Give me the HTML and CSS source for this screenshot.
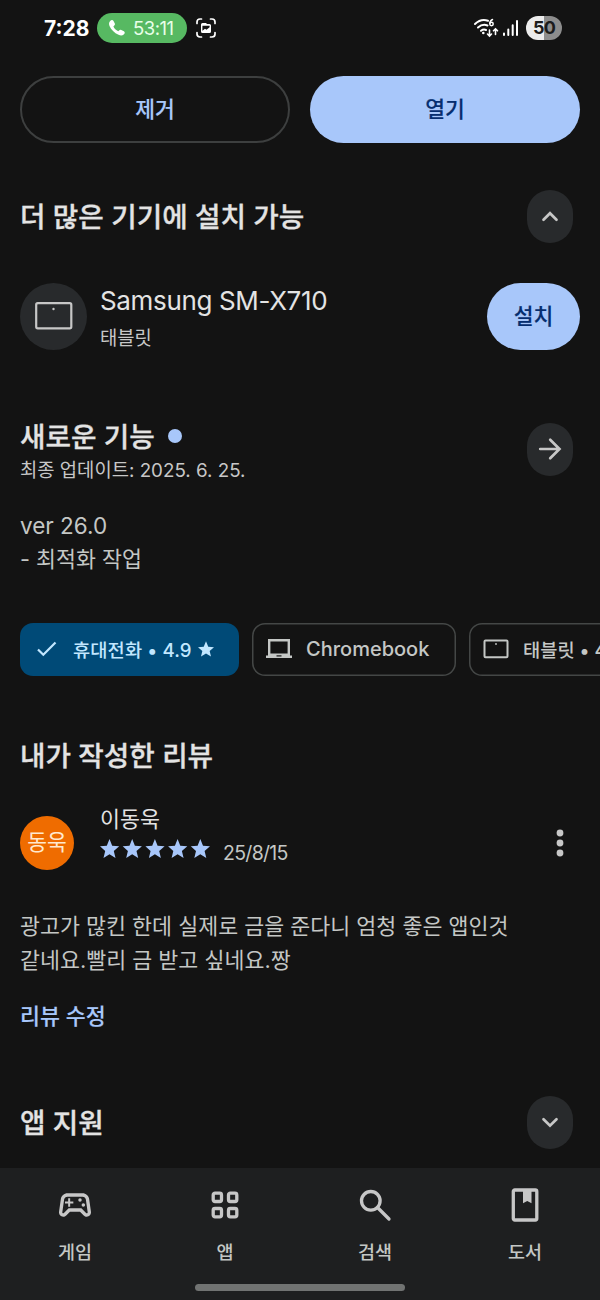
FILE: index.html
```html
<!DOCTYPE html>
<html lang="ko">
<head>
<meta charset="utf-8">
<title>앱 정보</title>
<link rel="stylesheet" href="styles.css">
</head>
<body>
<div class="screen">
  <header class="status">
    <span class="time">7:28</span>
    <span class="call">
      <svg width="18" height="18" viewBox="0 0 18 18"><path d="M2 2.200C3.200.8 4.800.8 5.500 2l1.300 2.600c.4.8.1 1.400-.5 2l-.9.9c.9 2 2.500 3.700 4.900 4.700l1-.9c.6-.6 1.300-.8 2-.4l2.600 1.400c1.200.8 1.100 2.200-.2 3.300-1.300 1.100-3.200 1.200-5.200.2C6.400 13.900 3.100 10.600 1.500 6.900.8 5 .9 3.400 2 2.200z" fill="#fff"/></svg>
      <span class="call-time">53:11</span>
    </span>
    <svg class="capture" width="22" height="22" viewBox="0 0 22 22" fill="none" stroke="#fff" stroke-width="1.700" stroke-linecap="round"><path d="M2 6.500V5Q2 2 5 2h1.500M15.500 2H17q3 0 3 3v1.500M20 15.500V17q0 3-3 3h-1.500M6.500 20H5q-3 0-3-3v-1.500"/><path fill-rule="evenodd" stroke="none" fill="#fff" d="M7.500 6h3.500l1 1h2.500Q16 7 16 8.500v6q0 1.500-1.500 1.500h-7Q6 16 6 14.500v-7Q6 6 7.500 6zM7.400 8.800v5l2.600-2 1.500 1 3.100-2.600V8.800z"/></svg>
    <div class="status-right">
      <svg width="26" height="22" viewBox="0 0 26 22" fill="none" stroke="#fff" stroke-width="2" stroke-linecap="round"><path d="M2 7Q8 1.300 15 3.800M5 10.500Q9.500 6.500 14.500 8.500M8 13.800q2.500-2 5-.8"/><circle cx="10.300" cy="16" r="1.300" fill="#fff" stroke="none"/><path stroke-width="1.500" d="M19.500 2.500Q17 3.500 16.800 6.500"/><circle cx="18.500" cy="7" r="1.700" stroke-width="1.500"/><path stroke-width="1.600" d="M16.500 13v5.500M14.500 17l2 2 2-2M22.500 17.500V12M20.500 13.800l2-2 2 2"/></svg>
      <svg class="bars" width="17" height="18" viewBox="0 0 17 18" stroke="#fff" stroke-width="2" stroke-linecap="round"><path d="M2 14.500V16M6.300 10.500V16M10.700 6.300V16"/><path d="M15 2V16"/></svg>
      <span class="battery">50</span>
    </div>
  </header>

  <div class="actions">
    <button class="btn outline">제거</button>
    <button class="btn filled">열기</button>
  </div>

  <section class="head devices-head">
    <h2>더 많은 기기에 설치 가능</h2>
    <span class="round"><svg width="24" height="24" viewBox="0 0 24 24"><path d="M5.500 14.700 12 8.200l6.500 6.500"/></svg></span>
  </section>

  <div class="device">
    <span class="device-icon"><svg width="38" height="28" viewBox="0 0 38 28"><rect x="1.200" y="1.200" width="35.100" height="25.100" rx="1.500"/><circle cx="18.500" cy="7" r="1.200"/></svg></span>
    <div class="device-text">
      <div class="device-name">Samsung SM-X710</div>
      <div class="device-kind">태블릿</div>
    </div>
    <button class="btn filled install">설치</button>
  </div>

  <section class="head news-head">
    <div>
      <h2>새로운 기능<i class="dot"></i></h2>
      <p class="updated">최종 업데이트: <span class="upd-date">2025. 6. 25.</span></p>
    </div>
    <span class="round"><svg width="24" height="24" viewBox="0 0 24 24"><path d="M2.200 12h19M12.200 2.700l9.300 9.300-9.300 9.300"/></svg></span>
  </section>
  <div class="notes"><p class="ver">ver 26.0</p><p>- 최적화 작업</p></div>

  <div class="chips">
    <span class="chip on">
      <svg width="22" height="18" viewBox="0 0 22 18"><path class="line" d="M2 9.500l5.300 5.300L19.500 2.500"/></svg>
      <span class="chip-label">휴대전화 • 4.9</span>
      <svg class="chip-star" width="16" height="16" viewBox="0 0 24 24"><path d="M12 .5l3.400 8 8.600.7-6.500 5.700 2 8.500L12 18.900l-7.500 4.500 2-8.500L0 9.200l8.600-.7z"/></svg>
    </span>
    <span class="chip book">
      <svg width="28" height="22" viewBox="0 0 28 22"><path fill-rule="evenodd" d="M3 1h22v16.500h2V20H1v-2.500h2zM5.400 3.400v12.200h17.200V3.400z"/><path class="cut" d="M11.500 17.300h5v1.200h-5z"/></svg>
      <span class="chip-label">Chromebook</span>
    </span>
    <span class="chip tab">
      <svg width="26" height="20" viewBox="0 0 26 20"><rect class="line thin" x="1.500" y="1.500" width="23" height="16.700" rx="1"/><circle cx="13" cy="5" r=".9"/></svg>
      <span class="chip-label">태블릿 • 4</span>
    </span>
  </div>

  <h2 class="mine">내가 작성한 리뷰</h2>
  <div class="author">
    <span class="avatar">동욱</span>
    <div class="author-info">
      <div class="author-name">이동욱</div>
      <div class="rating">
        <svg class="stars" width="112" height="20" viewBox="0 0 112 20"><defs><path id="star" d="M9.500 0l2.700 6.700 7 .6-5.400 4.700 1.700 7-6-3.800-6 3.800 1.700-7L0 7.300l6.800-.6z"/></defs><use href="#star"/><use href="#star" x="22.700"/><use href="#star" x="45.400"/><use href="#star" x="68.100"/><use href="#star" x="90.800"/></svg>
        <span class="date">25/8/15</span>
      </div>
    </div>
    <svg class="more" width="8" height="30" viewBox="0 0 8 30"><circle cx="4" cy="5" r="3.400"/><circle cx="4" cy="15" r="3.400"/><circle cx="4" cy="25" r="3.400"/></svg>
  </div>
  <p class="review">광고가 많킨 한데 실제로 금을 준다니 엄청 좋은 앱인것<br>같네요.빨리 금 받고 싶네요.짱</p>
  <a class="edit">리뷰 수정</a>

  <section class="head support-head">
    <h2>앱 지원</h2>
    <span class="round"><svg width="24" height="24" viewBox="0 0 24 24"><path d="M5.500 8.200 12 14.700l6.500-6.500"/></svg></span>
  </section>

  <nav class="nav">
    <div class="tabs">
      <div class="tab-item"><svg width="40" height="40" viewBox="0 0 24 24"><path fill-rule="evenodd" d="M21.580 16.090l-1.090-7.660C20.210 6.460 18.520 5 16.530 5H7.470C5.480 5 3.790 6.460 3.510 8.430l-1.090 7.660C2.200 17.630 3.390 19 4.940 19c.68 0 1.320-.27 1.800-.75L9 16h6l2.250 2.250c.48.48 1.130.75 1.800.75 1.560 0 2.750-1.370 2.530-2.910zM19.480 16.810c-.08.09-.21.19-.42.19-.15 0-.29-.06-.39-.16L15.830 14H8.170l-2.840 2.840c-.1.1-.24.16-.39.16-.21 0-.34-.1-.42-.19-.08-.09-.16-.23-.13-.44l1.090-7.660C5.630 7.740 6.480 7 7.470 7h9.060c.99 0 1.840.74 1.980 1.720l1.090 7.660c.03.2-.05.34-.12.43z"/><path d="M9.100 8H7.900v1.900H6v1.200h1.900V13h1.200v-1.900H11V9.900H9.100z"/><circle cx="15" cy="9" r="1.050"/><circle cx="17" cy="12" r="1.050"/></svg><span>게임</span></div>
      <div class="tab-item"><svg width="40" height="40" viewBox="0 0 40 40"><g class="stroke"><rect x="8.200" y="8.200" width="8.300" height="8.300" rx="1.800"/><rect x="23.500" y="8.200" width="8.300" height="8.300" rx="1.800"/><rect x="8.200" y="23.500" width="8.300" height="8.300" rx="1.800"/><rect x="23.500" y="23.500" width="8.300" height="8.300" rx="1.800"/></g></svg><span>앱</span></div>
      <div class="tab-item"><svg width="40" height="40" viewBox="0 0 40 40"><g class="stroke"><circle cx="15.800" cy="15.800" r="9.300"/><path stroke-linecap="round" d="M22.500 22.500 34 34"/></g></svg><span>검색</span></div>
      <div class="tab-item"><svg width="40" height="40" viewBox="0 0 40 40"><rect class="stroke" x="8.300" y="5" width="23.500" height="30" rx="1.500"/><path d="M18 5h8.500v13.200l-4.250-2.200L18 18.200z"/></svg><span>도서</span></div>
    </div>
    <div class="handle"></div>
  </nav>
</div>
</body>
</html>
```
FILE: styles.css
```css
* { box-sizing: border-box; }
body { margin: 0; background: #131313; }
h2, p { margin: 0; }
svg { display: block; flex: none; }
.screen {
  width: 600px;
  height: 1300px;
  overflow: hidden;
  display: flex;
  flex-direction: column;
  background: #131313;
  color: #e3e3e3;
  font-family: Inter, "Noto Sans CJK KR", sans-serif;
  white-space: nowrap;
}
.status { display: flex; align-items: center; height: 56px; padding: 0 38px 0 44px; flex: none; }
.time { width: 53px; font-size: 21px; font-weight: 700; color: #fff; }
.call { display: flex; align-items: center; width: 90px; height: 30px; padding-left: 11px; border-radius: 15px; background: #57b962; }
.call-time { margin-left: 7px; font-size: 18.500px; letter-spacing: -0.500px; color: #e9ffe9; }
.capture { margin-left: 8px; }
.status-right { display: flex; align-items: center; margin-left: auto; }
.bars { margin: 0 7px 0 3px; }
.battery {
  width: 36px; height: 24px; border-radius: 12px;
  background: linear-gradient(90deg, #ececec 50%, #8d8d8d 50%);
  color: #1c1c1c; font-size: 18px; font-weight: 700; letter-spacing: -0.800px; line-height: 24px; text-align: center;
}
.actions { display: grid; grid-template-columns: 1fr 1fr; gap: 20px; margin: 20px 20px 0; flex: none; }
.btn {
  height: 67px; padding: 0; border: 0; border-radius: 34px;
  font: 500 21.500px/67px Inter, "Noto Sans CJK KR", sans-serif;
  -webkit-text-stroke: 0.150px currentColor;
}
.outline { border: 2px solid #3d3f3f; background: none; color: #a8c7fa; line-height: 63px; }
.filled { background: #a8c7fa; color: #062e6f; }
.head { display: flex; align-items: center; justify-content: space-between; padding: 0 27px 0 20px; flex: none; }
h2 { font-size: 27.700px; font-weight: 500; line-height: 40px; -webkit-text-stroke: 0.300px currentColor; }
.round { display: flex; align-items: center; justify-content: center; width: 46px; height: 53px; border-radius: 23px; background: #282a2c; flex: none; }
.round path { fill: none; stroke: #c7c7c7; stroke-width: 2.700; stroke-linecap: round; }
.devices-head { margin-top: 47px; }
.device { display: flex; align-items: center; height: 67px; margin: 40px 20px 0; flex: none; }
.device-icon { display: flex; align-items: center; justify-content: center; width: 67px; height: 67px; border-radius: 50%; background: #282a2c; }
.device-icon svg { margin-top: -1px; fill: none; stroke: #c7c7c7; stroke-width: 2.200; }
.device-icon circle { fill: #c7c7c7; stroke: none; }
.device-text { margin: 3px 0 0 13px; }
.device-name { font-size: 26px; line-height: 40px; letter-spacing: -0.350px; }
.device-kind { font-size: 18.800px; line-height: 35px; color: #c7c7c7; }
.install { width: 93px; margin-left: auto; }
.news-head { margin-top: 66px; height: 66px; }
.news-head > div { padding-top: 3px; }
.dot { display: inline-block; width: 14px; height: 14px; margin-left: 13px; border-radius: 50%; background: #a8c7fa; vertical-align: 4px; }
.updated { font-size: 18.800px; line-height: 27px; color: #c7c7c7; }
.notes { margin: 27px 20px 0; font-size: 21.700px; line-height: 33.500px; color: #c4c7c5; flex: none; }
.ver { font-size: 22.500px; }
.chips { display: flex; gap: 13px; margin: 47px 0 0 20px; flex: none; }
.chip { display: flex; align-items: center; height: 53px; padding-bottom: 1px; box-shadow: inset 0 0 0 1.500px #444746; border-radius: 13px; flex: none; font-size: 18.700px; font-weight: 500; color: #c4c7c5; }
.chip svg { fill: #c4c7c5; }
.chip .line { fill: none; stroke: currentColor; stroke-width: 2.200; }
.chip .thin { stroke-width: 2; }
.chip .cut { fill: #131313; }
.chip.on { width: 219px; padding-left: 16px; background: #004a77; box-shadow: none; color: #c2e7ff; }
.chip.on svg { fill: #c2e7ff; }
.chip-label { margin-top: -2px; }
.chip.on .chip-label { margin-left: 15px; letter-spacing: 0.100px; }
.chip-star { margin-left: 6px; }
.book { width: 204px; padding-left: 13px; }
.book .chip-label { margin: 0 0 0 13px; font-size: 20px; }
.tab { width: 200px; padding-left: 14px; }
.tab .chip-label { margin-left: 14px; }
.mine { margin: 60px 20px 0; flex: none; }
.author { display: flex; align-items: center; height: 70px; margin: 27px 36px 0 20px; flex: none; }
.avatar { width: 54px; height: 54px; margin-top: 9px; border-radius: 50%; background: #ef6c00; color: #ffe9cf; font-size: 21.500px; line-height: 53px; text-align: center; }
.author-info { margin: -8px 0 0 26px; }
.author-name { font-size: 21.700px; line-height: 31px; }
.rating { display: flex; align-items: center; height: 30px; }
.stars { margin-top: -1px; fill: #a8c7fa; }
.date { margin: 6px 0 0 11px; font-size: 19.500px; letter-spacing: -0.700px; color: #c4c7c5; }
.more { margin: 9px 0 0 auto; fill: #c7c7c7; }
.review { margin: 37px 20px 0; font-size: 21.720px; line-height: 33.500px; color: #c4c7c5; flex: none; }
.edit { margin: 23px 20px 0; font-size: 21.700px; font-weight: 500; line-height: 32px; color: #a8c7fa; -webkit-text-stroke: 0.150px currentColor; flex: none; }
.support-head { margin-top: 64px; }
.nav { margin-top: auto; height: 132px; background: #1e1f20; flex: none; }
.tabs { display: grid; grid-template-columns: repeat(4, 1fr); padding-top: 17px; }
.tab-item { display: flex; flex-direction: column; align-items: center; font-size: 18.500px; font-weight: 500; line-height: 28px; color: #c4c7c5; }
.tab-item span { margin: 13px 0 -1px; }
.tab-item svg { fill: #c7c7c7; }
.tab-item .stroke { fill: none; stroke: #c7c7c7; stroke-width: 3.300; }
.handle { width: 210px; height: 7px; margin: 19px auto 0; border-radius: 4px; background: #717372; }
```
